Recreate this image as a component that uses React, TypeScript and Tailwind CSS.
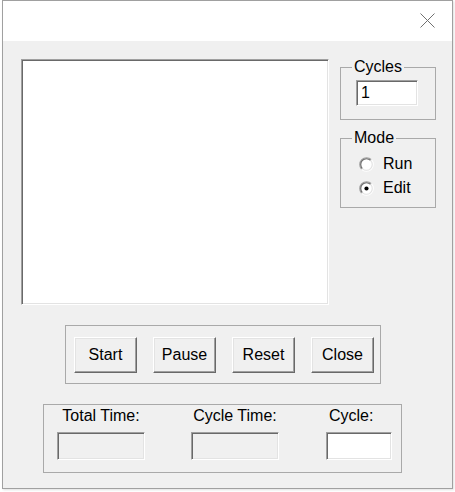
import React from "react";

const sunken =
  "border border-t-[#a0a0a0] border-l-[#a0a0a0] border-b-white border-r-white shadow-[inset_1px_1px_0_#696969,inset_-1px_-1px_0_#e3e3e3]";

function Radio({ checked }: { checked?: boolean }) {
  return (
    <svg width="15" height="15" viewBox="0 0 13 13">
      <circle cx="6.5" cy="6.5" r="5.5" fill="#fff" />
      <path d="M2.26 10.74 A6 6 0 0 1 10.74 2.26" stroke="#a0a0a0" fill="none" />
      <path d="M2.96 10.04 A5 5 0 0 1 10.04 2.96" stroke="#696969" fill="none" />
      <path d="M10.74 2.26 A6 6 0 0 1 2.26 10.74" stroke="#ffffff" fill="none" />
      <path d="M10.04 2.96 A5 5 0 0 1 2.96 10.04" stroke="#e3e3e3" fill="none" />
      {checked && <circle cx="6.5" cy="6.5" r="1.8" fill="#000" />}
    </svg>
  );
}

function Btn({ label }: { label: string }) {
  return (
    <div className="w-[63px] h-[36px] flex items-center justify-center bg-[#f0f0f0] border border-t-white border-l-white border-b-[#696969] border-r-[#696969] shadow-[inset_-1px_-1px_0_#a0a0a0,inset_1px_1px_0_#e3e3e3]">
      {label}
    </div>
  );
}

export default function App() {
  return (
    <div
      className="w-[455px] h-[492px] bg-white text-black text-[16px] leading-[18px]"
      style={{ fontFamily: '"Liberation Sans", Arial, sans-serif' }}
    >
      <div className="ml-[2px] w-[451px] h-[489px] border border-[#a0a0a0] bg-[#f0f0f0] flex flex-col shadow-[1px_1px_2px_rgba(0,0,0,0.12)]">
        {/* title bar */}
        <div className="h-[40px] bg-white flex justify-end items-start shrink-0">
          <svg width="15" height="15" viewBox="0 0 15 15" className="mt-[12px] mr-[17px]">
            <path d="M0.5 0.5 L14.5 14.5 M14.5 0.5 L0.5 14.5" stroke="#707070" strokeWidth="1" fill="none" />
          </svg>
        </div>

        {/* body */}
        <div className="flex flex-col pt-[18px]">
          <div className="flex items-start">
            <div className={`ml-[18px] w-[308px] h-[246px] bg-white ${sunken}`} />
            <div className="ml-[11px] w-[96px] flex flex-col">
              <fieldset className="border border-[#a9a9a9] pb-[13px]">
                <legend className="ml-[11px] px-[2px] leading-[16px]">Cycles</legend>
                <div className={`ml-[15px] mt-[5px] w-[62px] h-[26px] bg-white flex items-center pl-[4px] ${sunken}`}>1</div>
              </fieldset>
              <fieldset className="mt-[10px] border border-[#a9a9a9] pb-[7px]">
                <legend className="ml-[11px] px-[2px] leading-[16px]">Mode</legend>
                <div className="ml-[18px] mt-[6px] flex flex-col">
                  <div className="h-[24px] flex items-center">
                    <Radio />
                    <span className="ml-[9px]">Run</span>
                  </div>
                  <div className="h-[24px] flex items-center">
                    <Radio checked />
                    <span className="ml-[9px]">Edit</span>
                  </div>
                </div>
              </fieldset>
            </div>
          </div>

          {/* buttons group */}
          <div className="mt-[20px] ml-[62px] w-[316px] h-[59px] border border-[#a9a9a9] flex items-start pl-[8px] pt-[11px] gap-[16px]">
            <Btn label="Start" />
            <Btn label="Pause" />
            <Btn label="Reset" />
            <Btn label="Close" />
          </div>

          {/* time group */}
          <div className="mt-[20px] ml-[40px] w-[359px] h-[69px] border border-[#a9a9a9] flex items-start pt-[2px]">
            <div className="ml-[13px] w-[88px] flex flex-col items-center">
              <span>Total Time:</span>
              <div className={`mt-[7px] w-[88px] h-[28px] bg-[#f0f0f0] ${sunken}`} />
            </div>
            <div className="ml-[46px] w-[88px] flex flex-col items-center">
              <span>Cycle Time:</span>
              <div className={`mt-[7px] w-[88px] h-[28px] bg-[#f0f0f0] ${sunken}`} />
            </div>
            <div className="ml-[47px] w-[66px] flex flex-col">
              <span className="pl-[3px]">Cycle:</span>
              <div className={`mt-[7px] w-[66px] h-[28px] bg-white ${sunken}`} />
            </div>
          </div>
        </div>
      </div>
    </div>
  );
}
